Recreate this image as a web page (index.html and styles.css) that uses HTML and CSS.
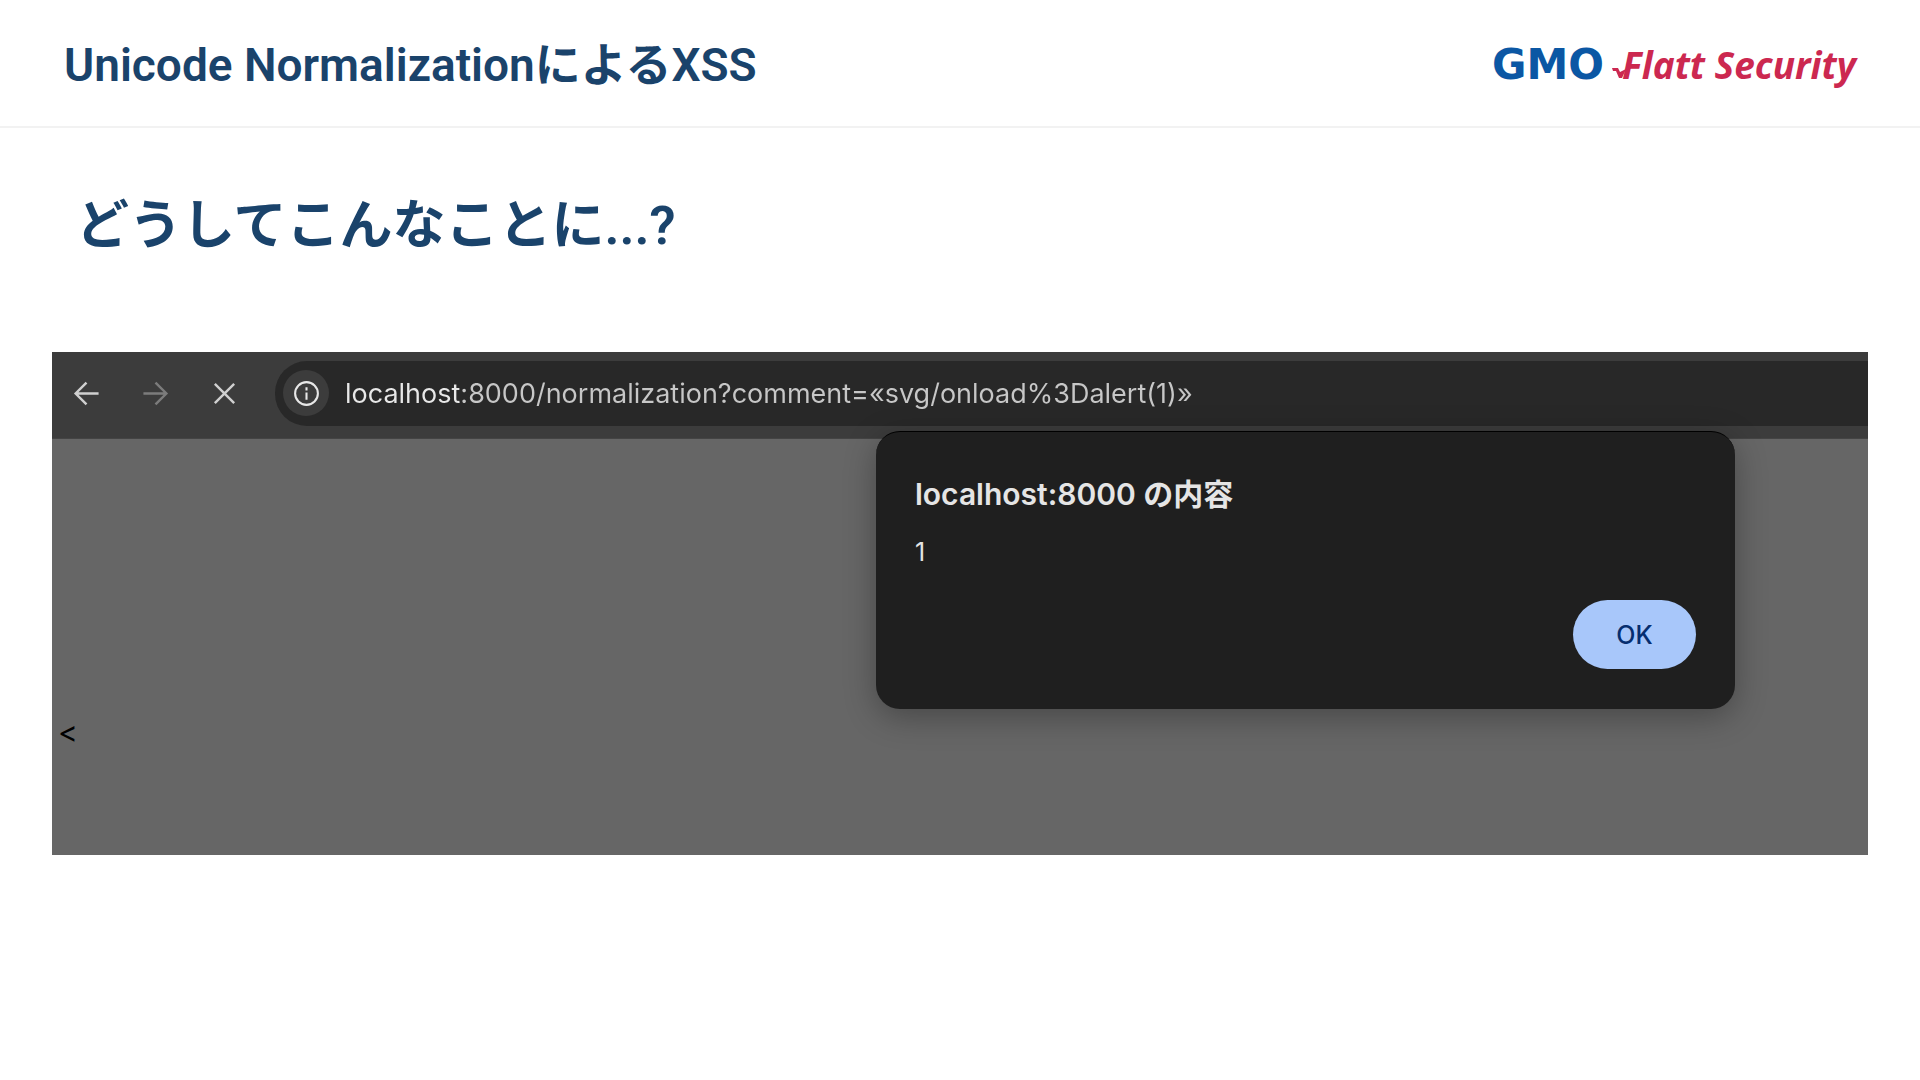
FILE: index.html
```html
<!DOCTYPE html>
<html lang="ja">
<head>
    <meta charset="UTF-8">
    <meta name="viewport" content="width=device-width, initial-scale=1.0">
    <title>Unicode NormalizationによるXSS</title>
    <link rel="stylesheet" href="styles.css">
</head>
<body>
    <header class="header">
        <h1>Unicode NormalizationによるXSS</h1>
        <div class="logo">
            <span class="logo-gmo">GMO</span>
            <svg class="logo-mark" viewBox="0 0 14 10" aria-hidden="true">
                <path d="M0 0h6l2 4 6-3-4 9H7L4 3H1z"/>
            </svg>
            <span class="logo-flatt">Flatt Security</span>
        </div>
    </header>

    <main class="slide">
        <h2>どうしてこんなことに...?</h2>

        <div class="browser">
            <div class="toolbar">
                <div class="nav">
                    <button class="nav-btn" aria-label="戻る">
                        <svg viewBox="0 0 24 24"><path d="M22 12H3M12 3l-9 9 9 9"/></svg>
                    </button>
                    <button class="nav-btn" aria-label="進む" disabled>
                        <svg viewBox="0 0 24 24"><path d="M2 12h19M12 3l9 9-9 9"/></svg>
                    </button>
                    <button class="nav-btn" aria-label="中止">
                        <svg viewBox="0 0 24 24"><path d="M4 4l16 16M20 4L4 20"/></svg>
                    </button>
                </div>
                <div class="omnibox">
                    <button class="info-btn" aria-label="サイト情報">
                        <svg viewBox="0 0 28 28">
                            <circle cx="14" cy="14" r="11"/>
                            <path d="M14 13v7M14 8v3"/>
                        </svg>
                    </button>
                    <input class="url" type="text" aria-label="アドレス" value="localhost:8000/normalization?comment=«svg/onload%3Dalert(1)»">
                </div>
            </div>

            <div class="page">&lt;</div>

            <div class="dialog" role="dialog" aria-labelledby="dialogTitle">
                <h3 id="dialogTitle">localhost:8000 の内容</h3>
                <p>1</p>
                <button class="ok-btn">OK</button>
            </div>
        </div>
    </main>
</body>
</html>
```

FILE: styles.css
```css
* {
    margin: 0;
    padding: 0;
    box-sizing: border-box;
}

body {
    font-family: Roboto, 'Noto Sans CJK JP', sans-serif;
    background: #fff;
    color: #1a436b;
}

button {
    border: none;
    background: none;
    cursor: pointer;
}

.header {
    display: flex;
    align-items: center;
    justify-content: space-between;
    height: 128px;
    padding: 4px 64px 0;
    border-bottom: 2px solid #f2f2f2;
}

.header h1 {
    font-size: 46px;
    line-height: 64px;
    font-weight: 600;
}

.logo {
    display: flex;
    align-items: center;
    line-height: 48px;
    white-space: nowrap;
}

.logo-gmo {
    font-family: 'DejaVu Sans', sans-serif;
    font-size: 42px;
    font-weight: 700;
    color: #0b57a4;
}

.logo-mark {
    width: 14px;
    height: 10px;
    margin: 16px -4px 0 8px;
    fill: #cc2850;
}

.logo-flatt {
    font-family: 'Open Sans', sans-serif;
    font-size: 37px;
    font-weight: 700;
    font-style: italic;
    color: #cc2850;
}

.slide {
    padding: 60px 52px;
}

.slide h2 {
    padding-left: 24px;
    font-size: 53px;
    line-height: 76px;
    font-weight: 600;
}

.browser {
    position: relative;
    margin-top: 88px;
    background: #666;
    font-family: Inter, 'Noto Sans CJK JP', sans-serif;
}

.toolbar {
    display: flex;
    align-items: center;
    gap: 36px;
    height: 87px;
    padding: 0 0 4px 20px;
    background: #3c3c3c;
    border-bottom: 1px solid #444;
}

.nav {
    display: flex;
    gap: 40px;
}

.nav-btn {
    width: 29px;
    height: 40px;
}

.nav-btn svg {
    display: block;
    width: 29px;
    height: 29px;
    margin: 0 auto;
    fill: none;
    stroke: #d0d0d0;
    stroke-width: 2;
}

.nav-btn:disabled svg {
    stroke: #7c7c7c;
}

.omnibox {
    display: flex;
    align-items: center;
    flex: 1;
    height: 65px;
    padding-left: 8px;
    background: #282828;
    border-radius: 32px 0 0 32px;
}

.info-btn {
    width: 46px;
    height: 46px;
    border-radius: 50%;
    background: #3c3c3c;
}

.info-btn svg {
    display: block;
    width: 29px;
    height: 29px;
    margin: 0 auto;
    fill: none;
    stroke: #e8e8e8;
    stroke-width: 2;
}

/* the host part is brighter than the rest of the address */
.url {
    flex: 1;
    height: 48px;
    margin-left: 16px;
    border: none;
    outline: none;
    font-family: inherit;
    font-size: 27px;
    color: transparent;
    background: linear-gradient(90deg, #e8e8e8 116px, #c7c7c7 116px);
    background-clip: text;
    -webkit-background-clip: text;
}

.page {
    height: 416px;
    padding: 273px 6px 0;
    font-size: 30px;
    line-height: 40px;
    color: #000;
}

.dialog {
    position: absolute;
    top: 79px;
    right: 133px;
    width: 859px;
    padding: 40px 39px;
    border-radius: 24px;
    background: #1f1f1f;
    border-top: 1px solid #000;
    box-shadow: 0 8px 32px rgba(0, 0, 0, 0.3);
    color: #e5e5e5;
}

.dialog h3 {
    font-size: 30px;
    line-height: 44px;
    font-weight: 600;
}

.dialog p {
    margin-top: 16px;
    font-size: 25px;
    line-height: 40px;
}

.ok-btn {
    display: block;
    width: 123px;
    height: 69px;
    margin: 28px 0 0 auto;
    border-radius: 35px;
    background: #a8c7fa;
    color: #062e6f;
    font-family: inherit;
    font-size: 25px;
    font-weight: 500;
}
```
